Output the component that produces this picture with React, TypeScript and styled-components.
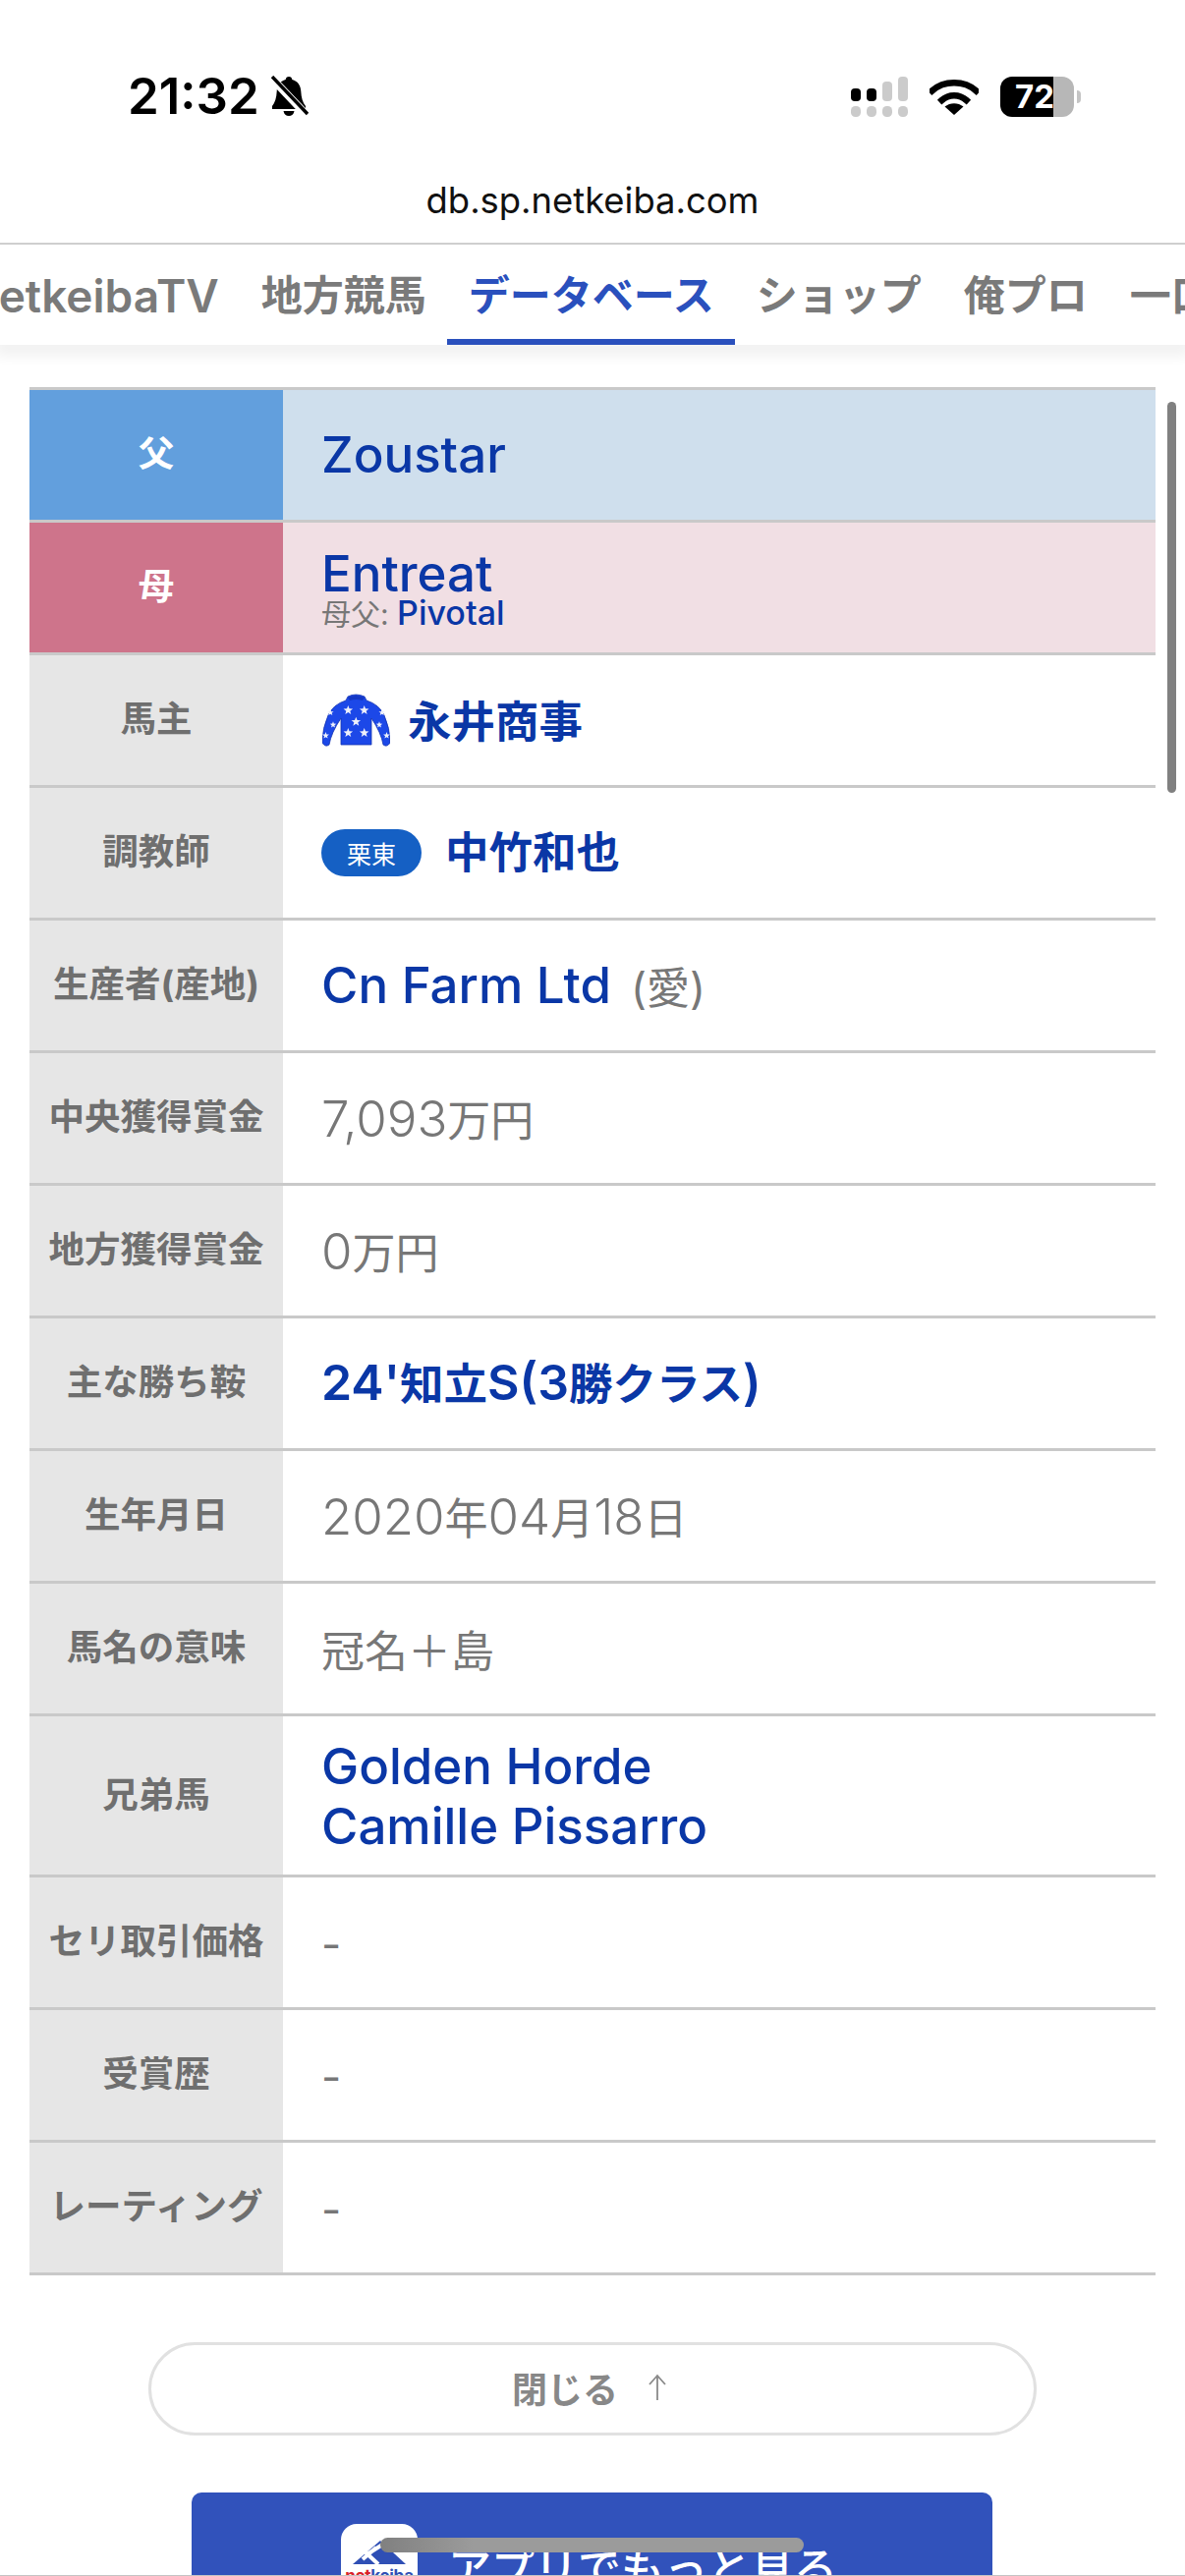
import type { ComponentType, ReactNode } from 'react';
import styled, { createGlobalStyle } from 'styled-components';

const GlobalStyle = createGlobalStyle`
	html, body {
		margin: 0;
		padding: 0;
		background: #fff;
	}
	body {
		font-family: Inter, 'Noto Sans CJK JP', sans-serif;
	}
	* {
		box-sizing: border-box;
	}
`;

const Page = styled.div`
	position: relative;
	width: 1206px;
	height: 2622px;
	overflow: hidden;
	background: #fff;
`;

const StatusBar = styled.div`
	display: flex;
	justify-content: space-between;
	align-items: flex-start;
	height: 160px;
	padding: 70px 113px 0 130px;
`;

const TimeGroup = styled.div`
	display: flex;
	align-items: center;
	gap: 10px;
	height: 56px;
`;

const Time = styled.span`
	font-size: 51px;
	font-weight: 600;
	line-height: 56px;
	color: #000;
`;

const StatusIcons = styled.div`
	display: flex;
	align-items: center;
	gap: 22px;
	height: 56px;
`;

const Battery = styled.div`
	position: relative;
	display: flex;
	align-items: center;
	justify-content: flex-start;
	width: 75px;
	height: 41px;
	padding-left: 15px;
	border-radius: 12px;
	background: linear-gradient(to right, #000 54px, #b7b7b7 54px);
	color: #fff;
	font-size: 33px;
	font-weight: 700;
	line-height: 41px;

	&::after {
		content: '';
		position: absolute;
		right: -7px;
		top: 14px;
		width: 4px;
		height: 13px;
		border-radius: 0 4px 4px 0;
		background: #c4c4c4;
	}
`;

const UrlBar = styled.div`
	display: flex;
	align-items: center;
	justify-content: center;
	height: 87px;
	font-size: 36.4px;
	color: #111;
`;

const Nav = styled.nav`
	position: relative;
	z-index: 1;
	display: flex;
	height: 104px;
	overflow: hidden;
	border-top: 2px solid #cfcfcf;
	background: #fff;
`;

const NavShadow = styled.div`
	height: 0;
	box-shadow: 0 2px 16px 6px rgba(0, 0, 0, 0.09);
`;

const NavTrack = styled.div`
	display: flex;
	flex-shrink: 0;
	margin-left: -51px;
`;

const NavItem = styled.div<{ $active?: boolean }>`
	flex-shrink: 0;
	height: 102px;
	padding: 24px 21.5px 0;
	font-size: 42px;
	font-weight: 600;
	line-height: 56px;
	white-space: nowrap;
	color: ${(props) => (props.$active ? '#2a50bd' : '#7a7a7a')};
	border-bottom: 6px solid ${(props) => (props.$active ? '#2a50bd' : 'transparent')};
`;

const NavLatin = styled.span`
	font-size: 46px;
`;

const Main = styled.main`
	padding: 43px 30px 0 30px;
`;

const Table = styled.div`
	border-top: 3px solid #c9c9c9;
`;

const Row = styled.div<{ $tall?: boolean }>`
	display: grid;
	grid-template-columns: 258px 1fr;
	height: ${(props) => (props.$tall ? '164px' : '135px')};
	border-bottom: 3px solid #c9c9c9;
`;

const Label = styled.div<{ $tone?: 'father' | 'mother' }>`
	display: flex;
	align-items: center;
	justify-content: center;
	padding-bottom: 7px;
	font-size: 36.5px;
	font-weight: 700;
	white-space: nowrap;
	color: ${(props) => (props.$tone ? '#fff' : '#6f6f6f')};
	background: ${(props) =>
		props.$tone === 'father' ? '#629fdd' : props.$tone === 'mother' ? '#ce748b' : '#e6e6e6'};
`;

const Value = styled.div<{ $tone?: 'father' | 'mother' }>`
	display: flex;
	align-items: center;
	padding-left: 39px;
	background: ${(props) =>
		props.$tone === 'father' ? '#cfdfed' : props.$tone === 'mother' ? '#f1dfe4' : '#fff'};
`;

const Stack = styled.div`
	display: flex;
	flex-direction: column;
`;

const MotherStack = styled(Stack)`
	padding-top: 3px;
`;

const LinkText = styled.span`
	font-size: 51px;
	font-weight: 500;
	line-height: 52px;
	white-space: nowrap;
	color: #0a37a6;
`;

const CjkLink = styled(LinkText)`
	font-size: 44.5px;
	font-weight: 700;
`;

const OwnerName = styled(CjkLink)`
	padding-top: 4px;
`;

const LatinRun = styled.span`
	font-size: 50px;
	font-weight: 600;
`;

const SiblingLink = styled(LinkText)`
	line-height: 61px;
`;

const SubLine = styled.div`
	margin-top: -3px;
	font-size: 30px;
	line-height: 34px;
	color: #777;
`;

const SubLink = styled.span`
	font-size: 34px;
	font-weight: 500;
	color: #0a37a6;
`;

const Plain = styled.span`
	font-size: 44px;
	font-weight: 400;
	white-space: nowrap;
	color: #777;
`;

const NumberRun = styled.span`
	font-size: 51px;
	font-weight: 300;
`;

const Origin = styled(Plain)`
	margin-left: 20px;
`;

const Dash = styled(Plain)`
	padding-top: 4px;
`;

const Silks = styled.svg`
	flex-shrink: 0;
	width: 69px;
	height: 54px;
	margin: 0 18px 0 1px;
`;

const Badge = styled.span`
	display: flex;
	align-items: center;
	justify-content: center;
	width: 102px;
	height: 48px;
	margin-right: 24px;
	border-radius: 24px;
	background: #1560c4;
	color: #fff;
	font-size: 25px;
`;

const CloseButton = styled.button`
	display: flex;
	align-items: center;
	justify-content: center;
	gap: 30px;
	width: 904px;
	height: 95px;
	margin: 68px 0 0 151px;
	padding: 0 6px 4px 0;
	border: 3px solid #e1e1e1;
	border-radius: 48px;
	background: #fff;
	color: #888;
	font-family: inherit;
	font-size: 36px;
	font-weight: 700;
`;

const AppBanner = styled.div`
	display: flex;
	align-items: flex-start;
	gap: 31px;
	width: 815px;
	height: 200px;
	margin: 58px 0 0 195px;
	padding: 32px 0 0 152px;
	border-radius: 10px;
	background: #3152bb;
`;

const AppIcon = styled.div`
	display: flex;
	flex-direction: column;
	align-items: center;
	flex-shrink: 0;
	width: 78px;
	height: 78px;
	padding-top: 17px;
	border-radius: 16px;
	background: #fff;
`;

const AppIconName = styled.span`
	font-size: 17px;
	font-weight: 700;
	line-height: 20px;
	letter-spacing: -0.3px;
	color: #2f4fb5;
`;

const AppIconRed = styled.span`
	color: #d8232a;
`;

const AppText = styled.span`
	margin-top: 14px;
	font-size: 44px;
	font-weight: 500;
	line-height: 64px;
	white-space: nowrap;
	color: #fff;
`;

const ScrollThumb = styled.div`
	position: absolute;
	top: 409px;
	left: 1188px;
	width: 9px;
	height: 398px;
	border-radius: 5px;
	background: #808080;
`;

const HomeIndicator = styled.div`
	position: absolute;
	z-index: 2;
	top: 2583px;
	left: 387px;
	width: 431px;
	height: 15px;
	border-radius: 8px;
	background: linear-gradient(to right, #808080, #9b9b9b 22%, #9b9b9b);
`;

const BottomEdge = styled.div`
	position: absolute;
	z-index: 2;
	left: 0;
	right: 0;
	bottom: 0;
	height: 1px;
	background: #c4c4c4;
`;

const navItems = ['netkeibaTV', '地方競馬', 'データベース', 'ショップ', '俺プロ', '一口'];

const plainRows: { label: string; text: string; link?: boolean }[] = [
	{ label: '中央獲得賞金', text: '7,093万円' },
	{ label: '地方獲得賞金', text: '0万円' },
	{ label: '主な勝ち鞍', text: "24'知立S(3勝クラス)", link: true },
	{ label: '生年月日', text: '2020年04月18日' },
	{ label: '馬名の意味', text: '冠名＋島' },
];

const tailRows = ['セリ取引価格', '受賞歴', 'レーティング'];

const silkStars = [
	[26.3, 17, 5],
	[42.7, 17, 5],
	[34.3, 28.7, 5],
	[26.3, 40, 5],
	[42.7, 40, 5],
	[8.3, 19.3, 3.4],
	[60.7, 19.3, 3.4],
	[11, 31.7, 3.4],
	[58, 31.7, 3.4],
	[3.5, 42.7, 3.6],
	[65.5, 42.7, 3.6],
];

// latin runs sit larger than the CJK around them in the reference
function withLatinRuns(text: string, Run: ComponentType<{ children?: ReactNode }>) {
	return text.split(/([\x20-\x7e]+)/).map((part, i) => (i % 2 === 1 ? <Run key={i}>{part}</Run> : part));
}

function starPoints(cx: number, cy: number, r: number) {
	const points: string[] = [];
	for (let i = 0; i < 10; i++) {
		const radius = i % 2 === 0 ? r : r * 0.42;
		const angle = (Math.PI / 5) * i - Math.PI / 2;
		points.push(`${cx + radius * Math.cos(angle)},${cy + radius * Math.sin(angle)}`);
	}
	return points.join(' ');
}

function BellOffIcon() {
	return (
		<svg width="40" height="42" viewBox="0 0 40 42">
			<path
				d="M20 1c2 0 3 1.300 3.300 3 5.700 1.500 8.700 6 9 12 .3 6.500 1.700 11 4.700 15v3H3v-3c3-4 4.400-8.500 4.700-15 .3-6 3.300-10.500 9-12C17 2.300 18 1 20 1z"
				fill="#000"
			/>
			<path d="M14.500 36h11c-.5 3.200-2.700 5-5.500 5s-5-1.800-5.500-5z" fill="#000" />
			<path d="M2 2l36 38" stroke="#fff" strokeWidth="8" />
			<path d="M3 1l36 38" stroke="#000" strokeWidth="3.400" />
		</svg>
	);
}

function SignalIcon() {
	return (
		<svg width="58" height="41" viewBox="0 0 58 41">
			<rect x="0" y="12" width="10" height="13" rx="4" fill="#000" />
			<rect x="16" y="12" width="10" height="13" rx="4" fill="#000" />
			<rect x="32" y="5" width="10" height="20" rx="4" fill="#cbcbcb" />
			<rect x="48" y="0" width="10" height="25" rx="4" fill="#cbcbcb" />
			<rect x="0" y="30" width="10" height="11" rx="4.500" fill="#cbcbcb" />
			<rect x="16" y="30" width="10" height="11" rx="4.500" fill="#cbcbcb" />
			<rect x="32" y="30" width="10" height="11" rx="4.500" fill="#cbcbcb" />
			<rect x="48" y="30" width="10" height="11" rx="4.500" fill="#cbcbcb" />
		</svg>
	);
}

function WifiIcon() {
	return (
		<svg width="50" height="37" viewBox="0 0 50 37">
			<path d="M2.500 12.500C14.500 1.500 35.500 1.500 47.500 12.500" fill="none" stroke="#000" strokeWidth="6.500" strokeLinecap="square" />
			<path d="M12.500 22C19.500 15.500 30.500 15.500 37.500 22" fill="none" stroke="#000" strokeWidth="6.500" strokeLinecap="square" />
			<path d="M25 37L15.500 28.500C21 24 29 24 34.500 28.500z" fill="#000" />
		</svg>
	);
}

function ArrowUpIcon() {
	return (
		<svg width="20" height="28" viewBox="0 0 20 28">
			<path d="M10 27V2M2 11l8-9 8 9" fill="none" stroke="#8a8a8a" strokeWidth="1.800" />
		</svg>
	);
}

function SilksIcon() {
	return (
		<Silks viewBox="0 0 69 54">
			<path
				d="M26 3Q34-1 43 3L45 7Q58 11 63 22Q69 35 69 50Q66 55 62 52Q60 40 50 25L50 52L19 52L19 25Q9 40 7 52Q3 55 0 50Q0 35 6 22Q11 11 24 7Z"
				fill="#1c48e8"
				stroke="#1433b0"
				strokeWidth="0.800"
			/>
			<path d="M26 4Q34 0 43 4L41 7Q34 5 28 7Z" fill="#1437c4" />
			{silkStars.map(([x, y, r]) => (
				<polygon key={`${x}-${y}`} points={starPoints(x, y, r)} fill="#eef1fb" />
			))}
		</Silks>
	);
}

function AppLogo() {
	return (
		<svg width="58" height="26" viewBox="0 0 58 26">
			<path d="M30 0L56 24H2z" fill="#2f4fb5" />
			<path d="M26 7L12 19M14 11l14 13M37 1L18 13" fill="none" stroke="#fff" strokeWidth="4" />
		</svg>
	);
}

function App() {
	return (
		<Page>
			<GlobalStyle />
			<StatusBar>
				<TimeGroup>
					<Time>21:32</Time>
					<BellOffIcon />
				</TimeGroup>
				<StatusIcons>
					<SignalIcon />
					<WifiIcon />
					<Battery>72</Battery>
				</StatusIcons>
			</StatusBar>
			<UrlBar>db.sp.netkeiba.com</UrlBar>
			<Nav>
				<NavTrack>
					{navItems.map((item) => (
						<NavItem key={item} $active={item === 'データベース'}>
							{withLatinRuns(item, NavLatin)}
						</NavItem>
					))}
				</NavTrack>
			</Nav>
			<NavShadow />
			<Main>
				<Table>
					<Row>
						<Label $tone="father">父</Label>
						<Value $tone="father">
							<LinkText>Zoustar</LinkText>
						</Value>
					</Row>
					<Row>
						<Label $tone="mother">母</Label>
						<Value $tone="mother">
							<MotherStack>
								<LinkText>Entreat</LinkText>
								<SubLine>
									母父: <SubLink>Pivotal</SubLink>
								</SubLine>
							</MotherStack>
						</Value>
					</Row>
					<Row>
						<Label>馬主</Label>
						<Value>
							<SilksIcon />
							<OwnerName>永井商事</OwnerName>
						</Value>
					</Row>
					<Row>
						<Label>調教師</Label>
						<Value>
							<Badge>栗東</Badge>
							<CjkLink>中竹和也</CjkLink>
						</Value>
					</Row>
					<Row>
						<Label>生産者(産地)</Label>
						<Value>
							<LinkText>Cn Farm Ltd</LinkText>
							<Origin>(愛)</Origin>
						</Value>
					</Row>
					{plainRows.map((row) => (
						<Row key={row.label}>
							<Label>{row.label}</Label>
							<Value>
								{row.link ? (
									<CjkLink>{withLatinRuns(row.text, LatinRun)}</CjkLink>
								) : (
									<Plain>{withLatinRuns(row.text, NumberRun)}</Plain>
								)}
							</Value>
						</Row>
					))}
					<Row $tall>
						<Label>兄弟馬</Label>
						<Value>
							<Stack>
								<SiblingLink>Golden Horde</SiblingLink>
								<SiblingLink>Camille Pissarro</SiblingLink>
							</Stack>
						</Value>
					</Row>
					{tailRows.map((label) => (
						<Row key={label}>
							<Label>{label}</Label>
							<Value>
								<Dash>-</Dash>
							</Value>
						</Row>
					))}
				</Table>
			</Main>
			<CloseButton>
				閉じる
				<ArrowUpIcon />
			</CloseButton>
			<AppBanner>
				<AppIcon>
					<AppLogo />
					<AppIconName>
						<AppIconRed>net</AppIconRed>keiba
					</AppIconName>
				</AppIcon>
				<AppText>アプリでもっと見る</AppText>
			</AppBanner>
			<ScrollThumb />
			<HomeIndicator />
			<BottomEdge />
		</Page>
	);
}

export default App;
